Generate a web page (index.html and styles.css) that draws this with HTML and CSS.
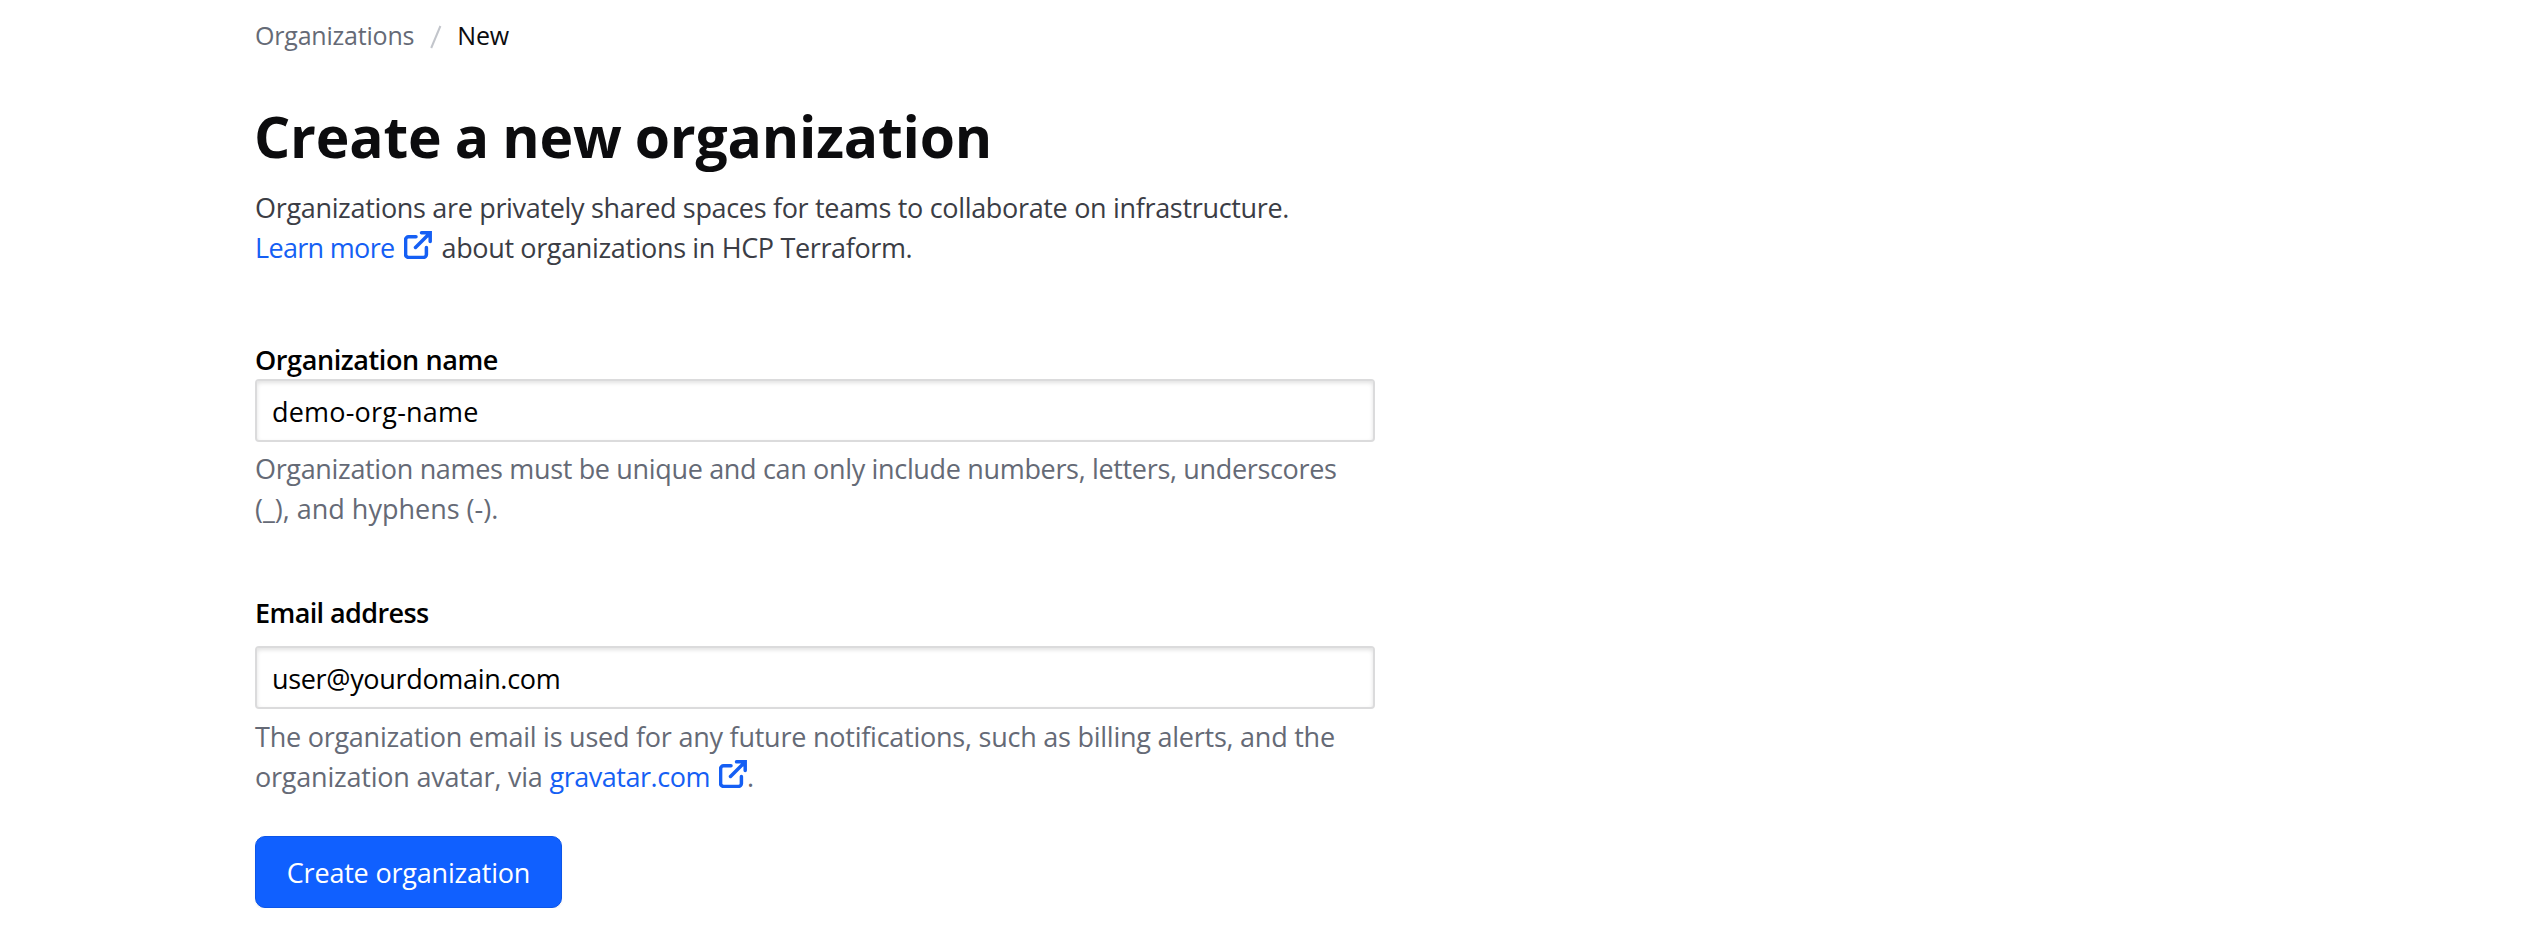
FILE: index.html
```html
<!DOCTYPE html>
<html lang="en">
<head>
<meta charset="utf-8">
<title>Create a new organization</title>
<link rel="stylesheet" href="styles.css">
</head>
<body>
<svg class="sprite" aria-hidden="true">
  <symbol id="external" viewBox="0 0 28 28">
    <path d="M12 5.8H4.6a3 3 0 0 0-3 3v14.6a3 3 0 0 0 3 3H19.4a3 3 0 0 0 3-3V16.5M11.5 16.5 25.5 2.5M17.5 1.8H26.2V10.5" fill="none" stroke="currentColor" stroke-width="3.5" stroke-linecap="round"/>
  </symbol>
</svg>
<main class="page">
  <nav class="crumbs">
    <a class="crumb" href="#">Organizations</a>
    <svg class="slash" viewBox="0 0 12 24"><path d="M1.2 23 10.4 1" stroke="#c2c5cb" stroke-width="2" fill="none"/></svg>
    <span class="current">New</span>
  </nav>
  <h1 class="title">Create a new organization</h1>
  <p class="intro"><span class="l1">Organizations are privately shared spaces for teams to collaborate on infrastructure.</span><br><a class="link" href="#"><span class="learn">Learn more</span><svg class="ext"><use href="#external"/></svg></a><span class="about">about organizations in HCP Terraform.</span></p>
  <form class="form">
    <label class="label name-label" for="name">Organization name</label>
    <input class="input name-input" id="name" type="text" value="demo-org-name">
    <p class="help"><span class="h1a">Organization names must be unique and can only include numbers, letters, underscores</span><br><span class="h1b">(_), and hyphens (-).</span></p>
    <label class="label email-label" for="email">Email address</label>
    <input class="input email-input" id="email" type="text" value="user@yourdomain.com">
    <p class="help"><span class="h2a">The organization email is used for any future notifications, such as billing alerts, and the</span><br><span class="h2b">organization avatar, via </span><a class="link" href="#"><span class="grav">gravatar.com</span><svg class="ext"><use href="#external"/></svg></a><span class="dot">.</span></p>
    <button class="submit" type="button">Create organization</button>
  </form>
</main>
</body>
</html>
```

FILE: styles.css
```css
* { box-sizing: border-box; }
body { margin: 0; background: #fff; font: 400 27px/40px "Open Sans", sans-serif; color: #3b3d45; }
.sprite { display: none; }
.page { width: 1375px; padding: 15px 0 0 255px; }

.crumbs { display: flex; align-items: center; height: 40px; font-size: 25px; }
.crumb { color: #656a76; text-decoration: none; letter-spacing: -0.2px; }
.slash { width: 12px; height: 24px; margin: 4px 15px 0 16px; }
.current { color: #0c0c0e; letter-spacing: -0.2px; }

.title { margin: 45px 0 16px -1px; font-size: 57px; line-height: 72px; font-weight: 700; letter-spacing: -0.2px; word-spacing: -1.4px; color: #0c0c0e; white-space: nowrap; }
.intro, .help { margin: 0; white-space: nowrap; }
.l1 { letter-spacing: -0.325px; }
.learn { letter-spacing: -0.68px; }
.about { margin-left: 10px; letter-spacing: -0.36px; }
.link { color: #155ff4; text-decoration: none; }
.ext { width: 28px; height: 28px; margin-left: 9px; vertical-align: -1px; }

.form { display: flex; flex-direction: column; align-items: flex-start; margin-top: 74px; }
.label { font-weight: 600; line-height: 36px; color: #000; }
.name-label { letter-spacing: -0.4px; }
.input { width: 1120px; height: 63px; padding: 1px 15px 0; border: 2px solid #dbdbdc; border-radius: 4px; background: #fff; box-shadow: inset 0 2px 4px rgba(0, 0, 0, 0.12); font: inherit; color: #000; }
.name-input { margin-top: 1px; letter-spacing: 0.2px; }
.help { margin-top: 7px; color: #656a76; }
.h1a { letter-spacing: -0.334px; }
.email-label { margin-top: 66px; letter-spacing: -0.6px; }
.email-input { margin-top: 15px; letter-spacing: -0.33px; }
.email-input + .help { margin-top: 8px; }
.h2a { letter-spacing: -0.24px; }
.h2b { letter-spacing: -0.21px; }
.grav { letter-spacing: -0.465px; }
.submit { width: 307px; height: 72px; margin-top: 39px; padding: 1px 0 0; border: 1px solid #0c56e9; border-radius: 10px; background: #1060ff; font: inherit; color: #fff; letter-spacing: -0.2px; box-shadow: 0 2px 2px rgba(101, 106, 118, 0.08); }
```
